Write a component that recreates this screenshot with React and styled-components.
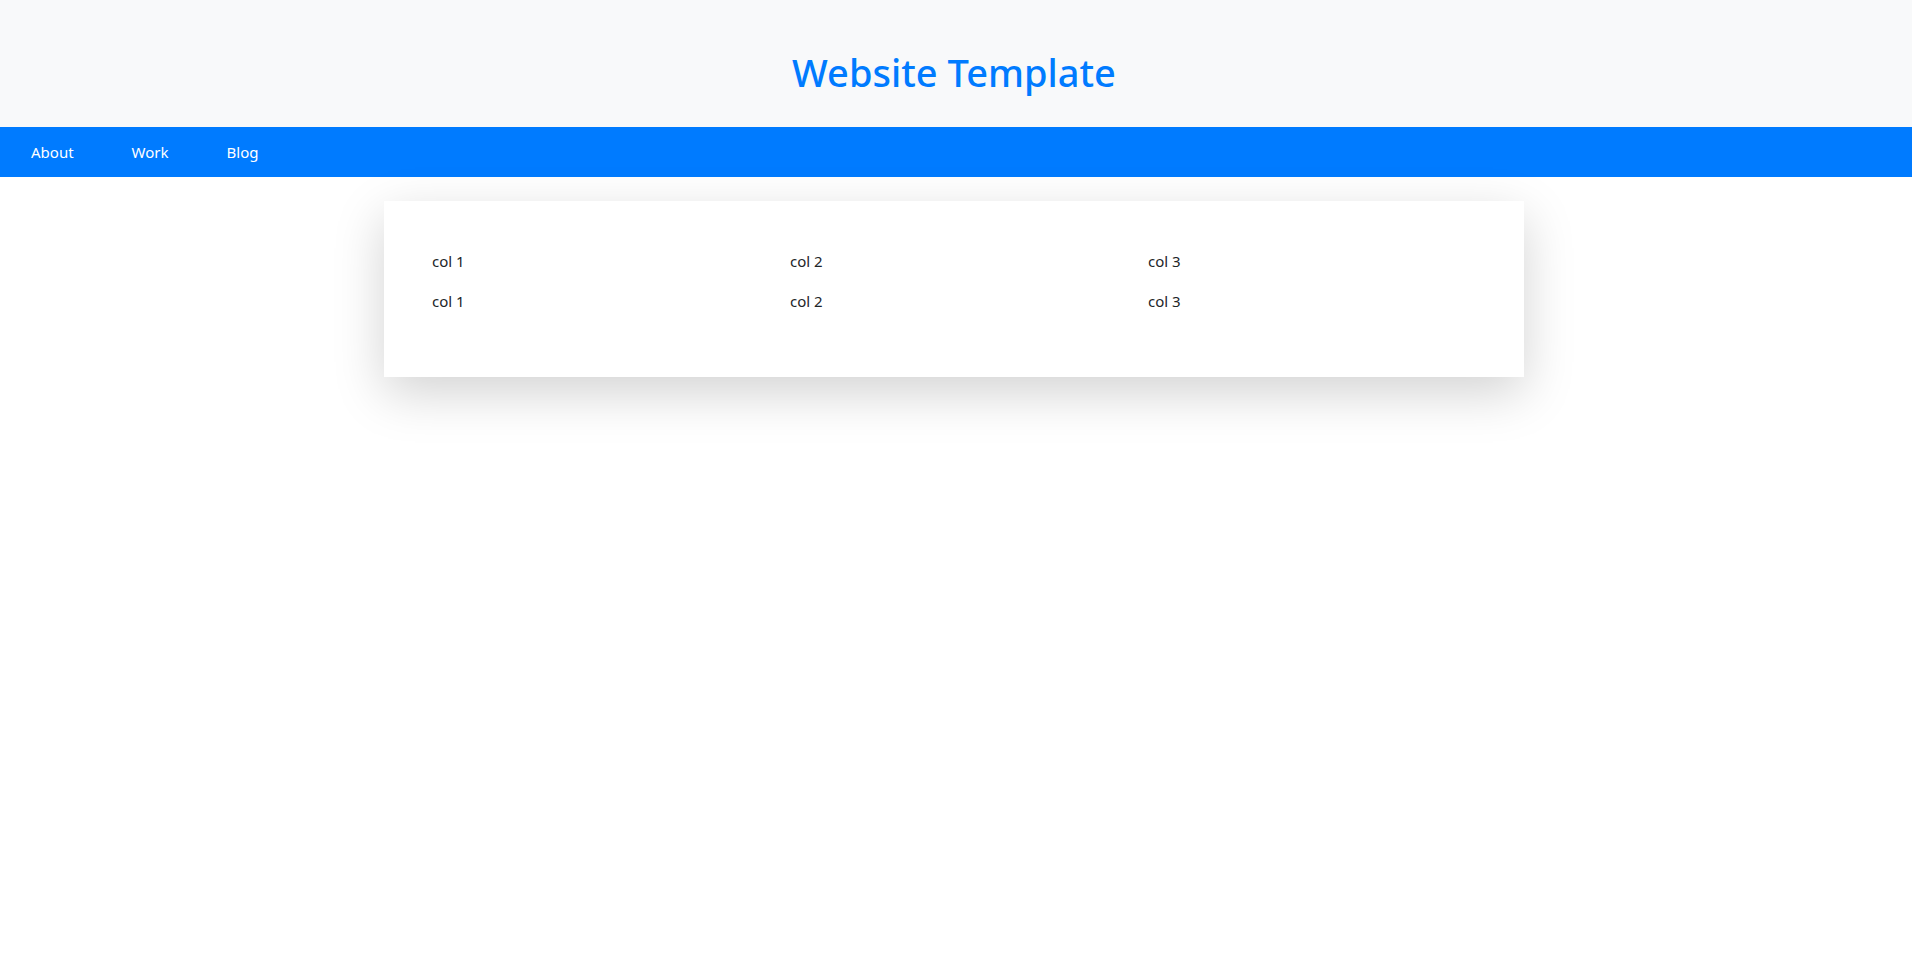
import React from "react";
import styled, { createGlobalStyle } from "styled-components";

const GlobalStyle = createGlobalStyle`
  *, *::before, *::after { box-sizing: border-box; }
  body {
    margin: 0;
    background: #fff;
    color: #212529;
    font-family: "Segoe UI", "Noto Sans", "Open Sans", sans-serif;
    font-size: 15px;
    line-height: 24px;
  }
`;

const Page = styled.div`
  min-height: 100vh;
`;

const Header = styled.header`
  padding: 48px 4px 31px 0;
  background: #f8f9fa;
  text-align: center;
`;

const Title = styled.h1`
  margin: 0;
  color: #007bff;
  font-size: 38px;
  font-weight: 500;
  line-height: 48px;
`;

const Nav = styled.nav`
  display: flex;
  gap: 58px;
  padding: 13px 31px;
  background: #007bff;
`;

const NavLink = styled.a`
  color: #fff;
  text-decoration: none;
`;

const Main = styled.main`
  padding: 24px 4px 24px 0;
`;

const Card = styled.section`
  max-width: 1140px;
  margin: 0 auto;
  padding: 48px;
  background: #fff;
  box-shadow: 0 16px 48px rgba(0, 0, 0, 0.175);
`;

const Row = styled.div`
  display: grid;
  grid-template-columns: repeat(3, 1fr);
  column-gap: 30px;
`;

const Column = styled.p`
  margin: 0 0 16px;
`;

const links = ["About", "Work", "Blog"];
const rows = [
  ["col 1", "col 2", "col 3"],
  ["col 1", "col 2", "col 3"],
];

export default function App() {
  return (
    <Page>
      <GlobalStyle />
      <Header>
        <Title>Website Template</Title>
      </Header>
      <Nav>
        {links.map((label) => (
          <NavLink key={label} href={`#${label.toLowerCase()}`}>
            {label}
          </NavLink>
        ))}
      </Nav>
      <Main>
        <Card>
          {rows.map((columns, index) => (
            <Row key={index}>
              {columns.map((text) => (
                <Column key={text}>{text}</Column>
              ))}
            </Row>
          ))}
        </Card>
      </Main>
    </Page>
  );
}
